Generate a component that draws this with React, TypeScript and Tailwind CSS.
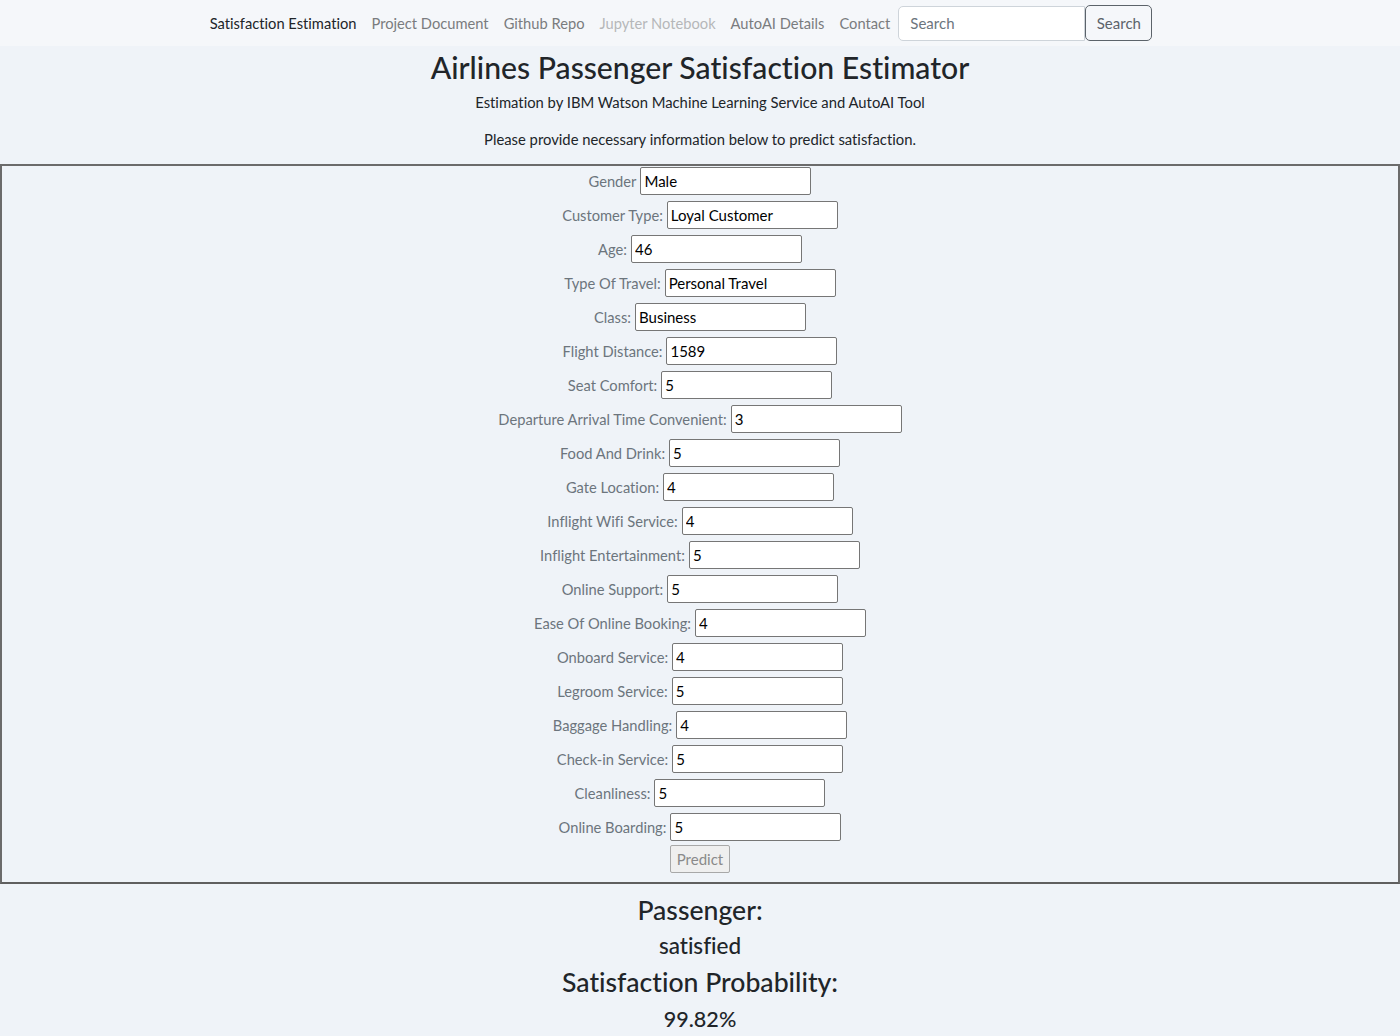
const navLinks = [
  { label: 'Satisfaction Estimation', tone: 'text-[#212529]' },
  { label: 'Project Document', tone: 'text-[#7a7c7e]' },
  { label: 'Github Repo', tone: 'text-[#7a7c7e]' },
  { label: 'Jupyter Notebook', tone: 'text-[#b5b7b9]' },
  { label: 'AutoAI Details', tone: 'text-[#7a7c7e]' },
  { label: 'Contact', tone: 'text-[#7a7c7e]' }
];

const fields: [string, string][] = [
  ['Gender', 'Male'],
  ['Customer Type:', 'Loyal Customer'],
  ['Age:', '46'],
  ['Type Of Travel:', 'Personal Travel'],
  ['Class:', 'Business'],
  ['Flight Distance:', '1589'],
  ['Seat Comfort:', '5'],
  ['Departure Arrival Time Convenient:', '3'],
  ['Food And Drink:', '5'],
  ['Gate Location:', '4'],
  ['Inflight Wifi Service:', '4'],
  ['Inflight Entertainment:', '5'],
  ['Online Support:', '5'],
  ['Ease Of Online Booking:', '4'],
  ['Onboard Service:', '4'],
  ['Legroom Service:', '5'],
  ['Baggage Handling:', '4'],
  ['Check-in Service:', '5'],
  ['Cleanliness:', '5'],
  ['Online Boarding:', '5']
];

export default function App() {
  return (
    <div className="min-h-screen bg-[#eff3f8] font-['Lato',sans-serif] text-[#212529] [font-variant-ligatures:none]">
      <nav className="flex h-[46px] items-center justify-center bg-[#f5f7fa] pr-[38px]">
        <div className="flex items-center gap-[15px] text-[14.7px]">
          {navLinks.map((l) => (
            <a key={l.label} className={l.tone}>
              {l.label}
            </a>
          ))}
        </div>
        <div className="ml-[8px] flex items-center">
          <input
            readOnly
            placeholder="Search"
            className="h-[35px] w-[187px] rounded-l-[5px] border border-[#ced4da] bg-white px-[11px] text-[15px] placeholder:text-[#6c757d]"
          />
          <button className="h-[36px] w-[67px] rounded-[5px] border border-[#5c636a] text-[15px] text-[#5c636a]">
            Search
          </button>
        </div>
      </nav>

      <header className="text-center">
        <h1 className="text-[30.2px] font-medium leading-[42px]">Airlines Passenger Satisfaction Estimator</h1>
        <p className="mt-[2px] text-[14.8px] leading-[24px]">Estimation by IBM Watson Machine Learning Service and AutoAI Tool</p>
        <p className="mt-[13px] text-[14.8px] leading-[24px]">Please provide necessary information below to predict satisfaction.</p>
      </header>

      <form className="mt-[13px] border-2 border-t-[#6b6b6b] border-l-[#6b6b6b] border-r-[#6b6b6b] border-b-[#5f5f5f] pb-[9px]">
        <div className="-mt-[2px]">
          {fields.map(([label, value]) => (
            <div key={label} className="flex h-[34px] items-center justify-center">
              <label className="text-[14.7px] text-[#6c757d]">{label}</label>
              <input
                readOnly
                value={value}
                className="ml-[4px] h-[28px] w-[171px] rounded-[2px] border border-[#767676] bg-white px-[3px] text-[15px] text-black"
              />
            </div>
          ))}
        </div>
        <div className="mt-[1px] flex justify-center">
          <button
            type="button"
            className="h-[28px] w-[60px] rounded-[2px] border border-[#a8a8a8] bg-[#efefef] text-[15px] text-[#8a8a8a]"
          >
            Predict
          </button>
        </div>
      </form>

      <section className="pt-[9px] text-center">
        <h4 className="text-[26.6px] font-medium leading-[34px]">Passenger:</h4>
        <p className="mt-[2px] text-[22.5px] font-medium leading-[34px]">satisfied</p>
        <h3 className="mt-[1px] text-[26.6px] font-medium leading-[36px]">Satisfaction Probability:</h3>
        <p className="mt-[2px] text-[21.6px] font-medium leading-[34px]">99.82%</p>
      </section>
    </div>
  );
}
